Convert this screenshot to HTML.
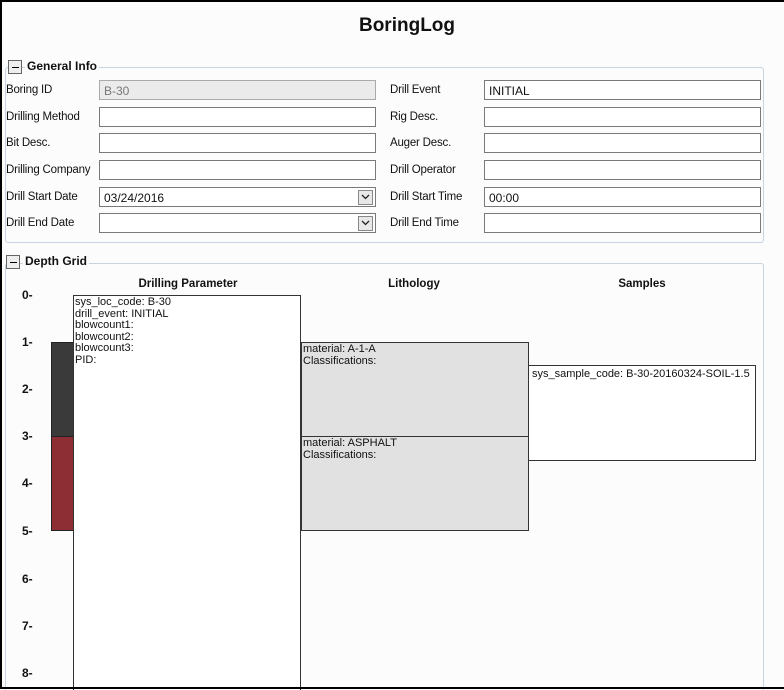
<!DOCTYPE html>
<html style="width:784px;height:690px;overflow:hidden"><head><style>
*{margin:0;padding:0;box-sizing:border-box}
body{width:784px;height:690px;position:relative;overflow:hidden;background:#fcfcfc;font-family:"Liberation Sans",Arial,sans-serif;font-size:11.5px;color:#111}
.a{position:absolute}
.frame{left:0;top:0;width:784px;height:689px;border-top:2px solid #000;border-left:2px solid #000;border-bottom:2px solid #000;z-index:5}
.title{left:0;width:814px;top:15px;text-align:center;font-weight:bold;font-size:19px}
.grp{border:1px solid #c8d4e0;border-radius:3px}
.tog{width:14px;height:14px;border:1px solid #666;background:#eee}
.tog:after{content:"";position:absolute;left:3px;top:6px;width:7px;height:1px;background:#000}
.gh{font-weight:bold;font-size:12px;background:#fcfcfc;padding:0 2px}
.lbl{font-size:11.5px;letter-spacing:-0.2px}
.in{height:20px;border:1px solid #7a7a7a;background:#fff;padding:3px 4px;font-size:12px}
.dd{width:15px;height:15px;border:1px solid #888;background:#e8e8e8;right:2px;top:2px}
.dd svg{position:absolute;left:2px;top:3px}
.dep{font-weight:bold;font-size:12px;left:22px}
.box{border:1px solid #333;font-size:11px;line-height:11.5px;padding:1px 1px;white-space:nowrap;overflow:hidden}
.ch{font-weight:bold;font-size:11.5px;text-align:center;width:220px}
</style></head><body>
<div class="a frame"></div>
<div class="a title">BoringLog</div>

<div class="a grp" style="left:5px;top:67px;width:759px;height:176px"></div>
<div class="a tog" style="left:8px;top:60px"></div>
<div class="a gh" style="left:25px;top:59px">General Info</div>

<div class="a lbl" style="left:6px;top:84px">Boring ID</div>
<div class="a in" style="left:99px;top:80px;width:277px;background:#ebebeb;color:#777;border-color:#aaa">B-30</div>
<div class="a lbl" style="left:6px;top:111px">Drilling Method</div>
<div class="a in" style="left:99px;top:107px;width:277px"></div>
<div class="a lbl" style="left:6px;top:137px">Bit Desc.</div>
<div class="a in" style="left:99px;top:133px;width:277px"></div>
<div class="a lbl" style="left:6px;top:164px">Drilling Company</div>
<div class="a in" style="left:99px;top:160px;width:277px"></div>
<div class="a lbl" style="left:6px;top:191px">Drill Start Date</div>
<div class="a in" style="left:99px;top:187px;width:277px">03/24/2016<div class="a dd"><svg width="9" height="6"><path d="M1 1L4.5 4.5L8 1" stroke="#222" stroke-width="1.3" fill="none"/></svg></div></div>
<div class="a lbl" style="left:6px;top:217px">Drill End Date</div>
<div class="a in" style="left:99px;top:213px;width:277px"><div class="a dd"><svg width="9" height="6"><path d="M1 1L4.5 4.5L8 1" stroke="#222" stroke-width="1.3" fill="none"/></svg></div></div>

<div class="a lbl" style="left:390px;top:84px">Drill Event</div>
<div class="a in" style="left:484px;top:80px;width:277px">INITIAL</div>
<div class="a lbl" style="left:390px;top:111px">Rig Desc.</div>
<div class="a in" style="left:484px;top:107px;width:277px"></div>
<div class="a lbl" style="left:390px;top:137px">Auger Desc.</div>
<div class="a in" style="left:484px;top:133px;width:277px"></div>
<div class="a lbl" style="left:390px;top:164px">Drill Operator</div>
<div class="a in" style="left:484px;top:160px;width:277px"></div>
<div class="a lbl" style="left:390px;top:191px">Drill Start Time</div>
<div class="a in" style="left:484px;top:187px;width:277px">00:00</div>
<div class="a lbl" style="left:390px;top:217px">Drill End Time</div>
<div class="a in" style="left:484px;top:213px;width:277px"></div>

<div class="a grp" style="left:5px;top:263px;width:759px;height:440px"></div>
<div class="a tog" style="left:6px;top:255px"></div>
<div class="a gh" style="left:23px;top:254px">Depth Grid</div>

<div class="a ch" style="left:78px;top:278px">Drilling Parameter</div>
<div class="a ch" style="left:304px;top:278px">Lithology</div>
<div class="a ch" style="left:532px;top:278px">Samples</div>

<div class="a dep" style="top:288px">0-</div>
<div class="a dep" style="top:335px">1-</div>
<div class="a dep" style="top:382px">2-</div>
<div class="a dep" style="top:429px">3-</div>
<div class="a dep" style="top:476px">4-</div>
<div class="a dep" style="top:524px">5-</div>
<div class="a dep" style="top:572px">6-</div>
<div class="a dep" style="top:619px">7-</div>
<div class="a dep" style="top:666px">8-</div>

<div class="a" style="left:51px;top:342px;width:23px;height:95px;background:#3a3a3a;border:1px solid #222"></div>
<div class="a" style="left:51px;top:436px;width:23px;height:95px;background:#8c2e33;border:1px solid #222"></div>

<div class="a box" style="left:73px;top:295px;width:228px;height:400px;background:#fff">sys_loc_code: B-30<br>drill_event: INITIAL<br>blowcount1:<br>blowcount2:<br>blowcount3:<br>PID:</div>
<div class="a box" style="left:301px;top:342px;width:228px;height:95px;background:#e1e1e1">material: A-1-A<br>Classifications:</div>
<div class="a box" style="left:301px;top:436px;width:228px;height:95px;background:#e1e1e1">material: ASPHALT<br>Classifications:</div>
<div class="a box" style="left:528px;top:365px;width:228px;height:96px;background:#fff;padding-top:3px;padding-left:3px">sys_sample_code: B-30-20160324-SOIL-1.5</div>
</body></html>
